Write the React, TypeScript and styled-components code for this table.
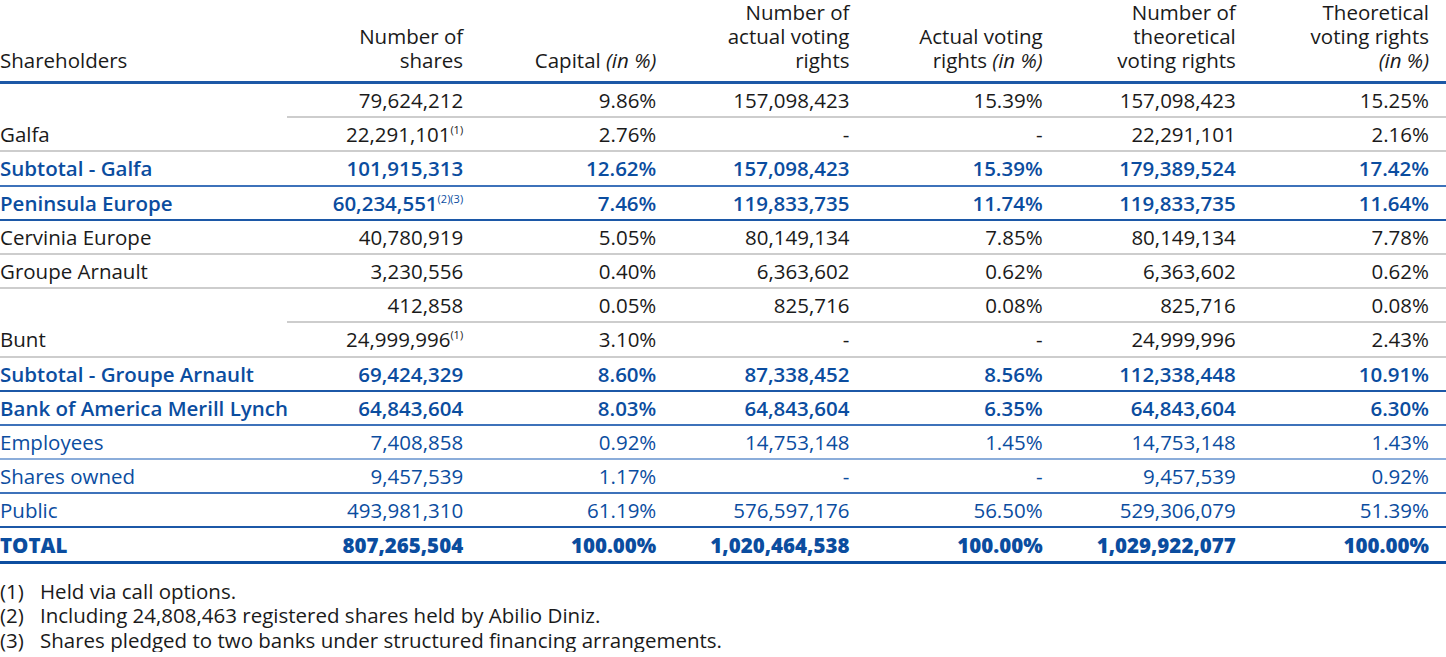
import React from "react";
import styled, { createGlobalStyle, css } from "styled-components";

const Global = createGlobalStyle`
  html, body { margin: 0; padding: 0; background: #ffffff; }
  body { font-family: "Open Sans", "DejaVu Sans", sans-serif; color: #1a1a1a; }
`;

const BLUE = "#0b4d9f";

type Tone = "black" | "blue";
type Weight = "regular" | "medium" | "heavy";
type Line = "gray" | "grayPartial" | "blue" | "blueLight" | "blueMid" | "total";

interface RowData {
  label: string;
  values: React.ReactNode[];
  tone: Tone;
  weight: Weight;
  line: Line;
}

const Page = styled.div`
  width: 1446px;
`;

const Table = styled.table`
  width: 1446px;
  table-layout: fixed;
  border-collapse: collapse;
  font-size: 20.5px;
  line-height: 24px;
`;

const HeadCell = styled.th<{ $left?: boolean }>`
  font-weight: 400;
  color: #1a1a1a;
  vertical-align: bottom;
  text-align: ${(p) => (p.$left ? "left" : "right")};
  padding: 0 ${(p) => (p.$left ? "0" : "17px")} 9px 0;
  border-bottom: 3px solid #1d58a6;
  white-space: nowrap;
`;

const Em = styled.i`
  font-style: italic;
`;

const lineColor: Record<Line, string> = {
  gray: "2px solid #cdcdcd",
  grayPartial: "2px solid #cdcdcd",
  blue: "2px solid #1c58a7",
  blueLight: "2px solid #8badda",
  blueMid: "2px solid #3e72ba",
  total: "3px solid #0d4ea0",
};

const Row = styled.tr<{ $tone: Tone; $weight: Weight; $line: Line }>`
  color: ${(p) => (p.$tone === "blue" ? BLUE : "#1a1a1a")};
  font-weight: ${(p) => (p.$weight === "heavy" ? 800 : p.$weight === "medium" ? 600 : 400)};
  & > td {
    border-bottom: ${(p) => lineColor[p.$line]};
  }
  ${(p) =>
    p.$line === "grayPartial" &&
    css`
      & > td:first-child {
        border-bottom: 2px solid transparent;
      }
    `}
`;

const Cell = styled.td<{ $left?: boolean }>`
  height: 32.2px;
  padding: 0 ${(p) => (p.$left ? "0" : "17px")} 0 0;
  text-align: ${(p) => (p.$left ? "left" : "right")};
  vertical-align: middle;
  white-space: nowrap;
`;

const Sup = styled.sup`
  font-size: 11px;
  font-weight: 400;
  line-height: 0;
  vertical-align: 8px;
`;

const Notes = styled.div`
  margin-top: 15px;
  font-size: 20.5px;
  line-height: 24.5px;
  color: #1a1a1a;
`;

const Note = styled.div`
  display: grid;
  grid-template-columns: 40px 1fr;
`;

const rows: RowData[] = [
  { label: "", values: ["79,624,212", "9.86%", "157,098,423", "15.39%", "157,098,423", "15.25%"], tone: "black", weight: "regular", line: "grayPartial" },
  { label: "Galfa", values: [<>22,291,101<Sup>(1)</Sup></>, "2.76%", "-", "-", "22,291,101", "2.16%"], tone: "black", weight: "regular", line: "gray" },
  { label: "Subtotal - Galfa", values: ["101,915,313", "12.62%", "157,098,423", "15.39%", "179,389,524", "17.42%"], tone: "blue", weight: "medium", line: "blueMid" },
  { label: "Peninsula Europe", values: [<>60,234,551<Sup>(2)(3)</Sup></>, "7.46%", "119,833,735", "11.74%", "119,833,735", "11.64%"], tone: "blue", weight: "medium", line: "blue" },
  { label: "Cervinia Europe", values: ["40,780,919", "5.05%", "80,149,134", "7.85%", "80,149,134", "7.78%"], tone: "black", weight: "regular", line: "gray" },
  { label: "Groupe Arnault", values: ["3,230,556", "0.40%", "6,363,602", "0.62%", "6,363,602", "0.62%"], tone: "black", weight: "regular", line: "gray" },
  { label: "", values: ["412,858", "0.05%", "825,716", "0.08%", "825,716", "0.08%"], tone: "black", weight: "regular", line: "grayPartial" },
  { label: "Bunt", values: [<>24,999,996<Sup>(1)</Sup></>, "3.10%", "-", "-", "24,999,996", "2.43%"], tone: "black", weight: "regular", line: "gray" },
  { label: "Subtotal - Groupe Arnault", values: ["69,424,329", "8.60%", "87,338,452", "8.56%", "112,338,448", "10.91%"], tone: "blue", weight: "medium", line: "blue" },
  { label: "Bank of America Merill Lynch", values: ["64,843,604", "8.03%", "64,843,604", "6.35%", "64,843,604", "6.30%"], tone: "blue", weight: "medium", line: "blueMid" },
  { label: "Employees", values: ["7,408,858", "0.92%", "14,753,148", "1.45%", "14,753,148", "1.43%"], tone: "blue", weight: "regular", line: "blueLight" },
  { label: "Shares owned", values: ["9,457,539", "1.17%", "-", "-", "9,457,539", "0.92%"], tone: "blue", weight: "regular", line: "blueMid" },
  { label: "Public", values: ["493,981,310", "61.19%", "576,597,176", "56.50%", "529,306,079", "51.39%"], tone: "blue", weight: "regular", line: "blue" },
  { label: "TOTAL", values: ["807,265,504", "100.00%", "1,020,464,538", "100.00%", "1,029,922,077", "100.00%"], tone: "blue", weight: "heavy", line: "total" },
];

const notes = [
  ["(1)", "Held via call options."],
  ["(2)", "Including 24,808,463 registered shares held by Abilio Diniz."],
  ["(3)", "Shares pledged to two banks under structured financing arrangements."],
];

export default function App() {
  return (
    <Page>
      <Global />
      <Table>
        <colgroup>
          <col style={{ width: 287 }} />
          <col />
          <col />
          <col />
          <col />
          <col />
          <col />
        </colgroup>
        <thead>
          <tr>
            <HeadCell $left>Shareholders</HeadCell>
            <HeadCell>Number of<br />shares</HeadCell>
            <HeadCell>Capital <Em>(in %)</Em></HeadCell>
            <HeadCell>Number of<br />actual voting<br />rights</HeadCell>
            <HeadCell>Actual voting<br />rights <Em>(in %)</Em></HeadCell>
            <HeadCell>Number of<br />theoretical<br />voting rights</HeadCell>
            <HeadCell>Theoretical<br />voting rights<br /><Em>(in %)</Em></HeadCell>
          </tr>
        </thead>
        <tbody>
          {rows.map((r, i) => (
            <Row key={i} $tone={r.tone} $weight={r.weight} $line={r.line}>
              <Cell $left>{r.label}</Cell>
              {r.values.map((v, j) => (
                <Cell key={j}>{v}</Cell>
              ))}
            </Row>
          ))}
        </tbody>
      </Table>
      <Notes>
        {notes.map(([n, t]) => (
          <Note key={n}>
            <span>{n}</span>
            <span>{t}</span>
          </Note>
        ))}
      </Notes>
    </Page>
  );
}
